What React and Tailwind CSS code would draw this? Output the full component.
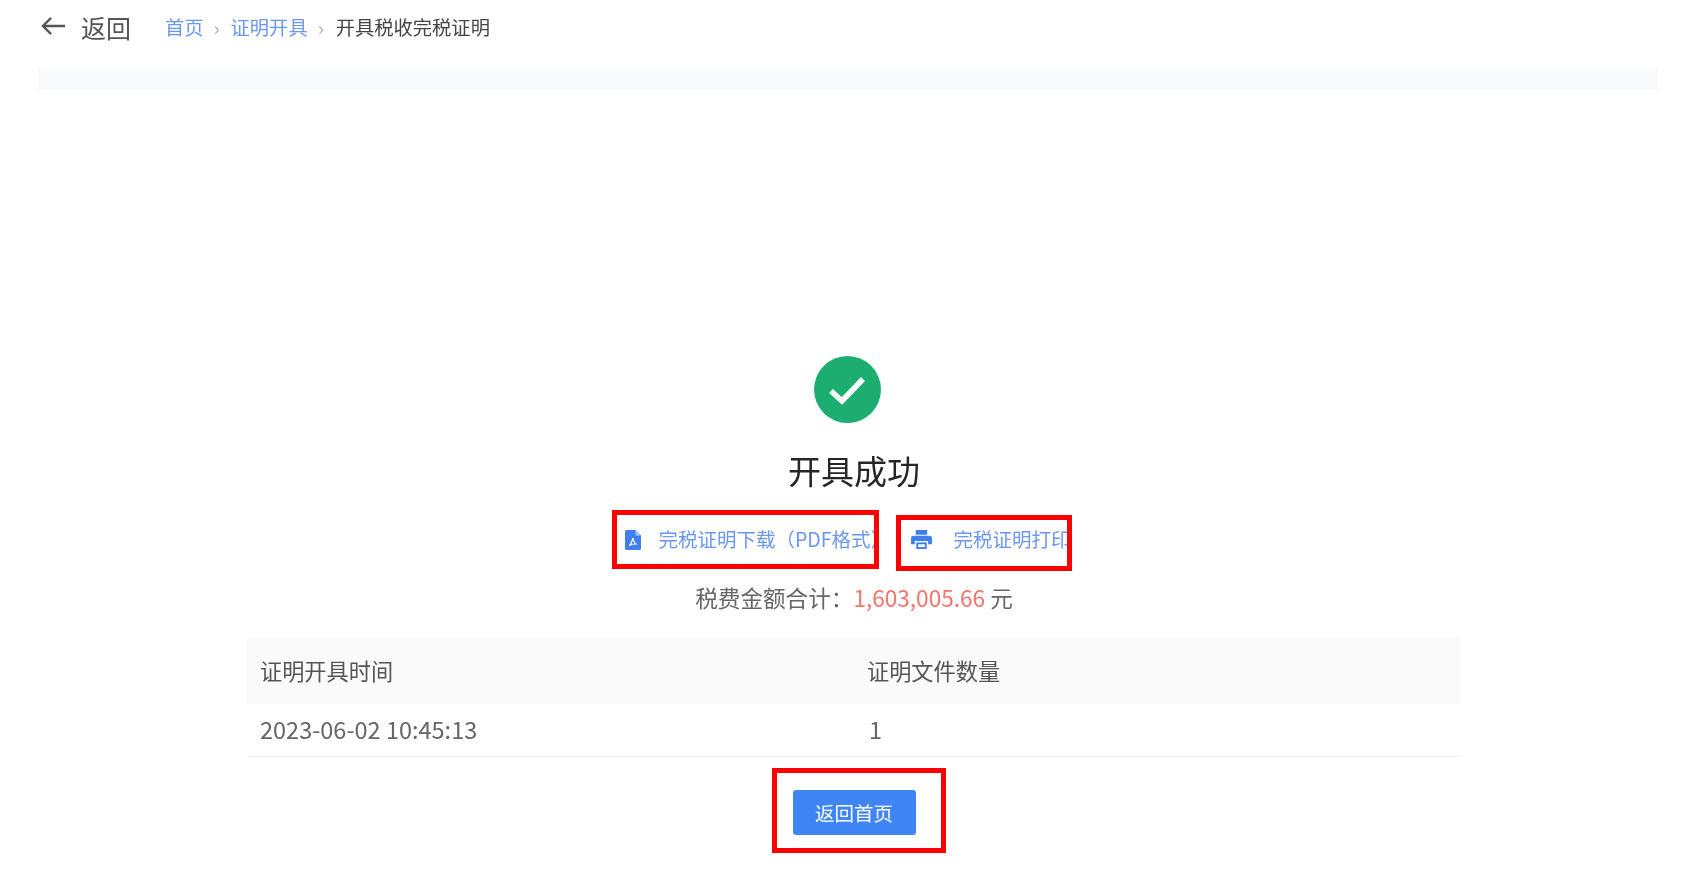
const FONT = "font-['Noto_Sans_CJK_SC','Noto_Sans',sans-serif]";

function PdfIcon() {
  return (
    <svg viewBox="0 0 16 20" className="w-[16px] h-[20px] shrink-0" aria-hidden="true">
      <path d="M1.5 0H10.5L16 5.5V18.5A1.5 1.5 0 0 1 14.5 20H1.5A1.5 1.5 0 0 1 0 18.5V1.5A1.5 1.5 0 0 1 1.5 0Z" fill="#3f7ff0" />
      <path d="M10.5 0V5.5H16Z" fill="#a9c6f8" />
      <path d="M8 8C7.2 11 6.4 13.5 4.4 15.6M8 8C8.5 11 9.6 13.6 11.8 14.4M4.4 15.4C6.6 14.2 9 13.8 11.8 14.2" stroke="#ffffff" strokeWidth="1.1" fill="none" />
    </svg>
  );
}

function PrintIcon() {
  return (
    <svg viewBox="0 0 22 20" className="w-[21px] h-[19px] shrink-0" aria-hidden="true">
      <path d="M5 0H17V5H5Z" fill="#3f7ff0" />
      <path d="M2.5 6H19.5A2.5 2.5 0 0 1 22 8.5V15H18V11.5H4V15H0V8.5A2.5 2.5 0 0 1 2.5 6Z" fill="#3f7ff0" />
      <path d="M5.5 13H16.5V20H5.5Z" fill="#3f7ff0" />
      <path d="M7.5 15H14.5V18H7.5Z" fill="#ffffff" />
    </svg>
  );
}

export default function App() {
  return (
    <div className={`${FONT} w-[1694px] h-[869px] overflow-hidden bg-white blur-[0.6px]`}>
      <header className="flex items-center h-[54px] pl-[41px]">
        <svg viewBox="0 0 26 20" className="w-[25px] h-[20px] mb-[2px] shrink-0" aria-hidden="true">
          <path d="M25 10H2M10.5 1.5L2 10L10.5 18.5" stroke="#555555" strokeWidth="2.4" fill="none" />
        </svg>
        <span className="ml-[15px] w-[84px] text-[25px] leading-none text-[#555555]">返回</span>
        <nav className="flex items-center pt-[2px] text-[19.3px] leading-none">
          <span className="text-[#6b97f2]">首页</span>
          <span className="w-[27px] pl-[10px] text-[20px] text-[#b0b0b0]">›</span>
          <span className="text-[#6b97f2]">证明开具</span>
          <span className="w-[28px] pl-[10px] text-[20px] text-[#b0b0b0]">›</span>
          <span className="text-[#444444]">开具税收完税证明</span>
        </nav>
      </header>

      <div className="ml-[38px] mt-[14px] w-[1620px] h-[22px] bg-[#f9fafc]" />

      <main className="ml-[247px] w-[1214px] flex flex-col items-center">
        <div className="mt-[266px] mr-[14px] w-[67px] h-[67px] rounded-full bg-[#1bae70] flex items-center justify-center">
          <svg viewBox="0 0 40 32" className="w-[40px] h-[32px]" aria-hidden="true">
            <path d="M4 17L15 27L36 5" stroke="#ffffff" strokeWidth="5.5" fill="none" />
          </svg>
        </div>

        <h1 className="mt-[27px] text-[33px] leading-[40px] font-normal text-[#262626]">开具成功</h1>

        <div className="mt-[20px] mr-[25px] flex items-start text-[19.5px] leading-none text-[#6b97f2]">
          <a className="w-[267px] h-[59px] border-[5px] border-[#ff0000] overflow-hidden flex items-center pl-[8px] whitespace-nowrap">
            <PdfIcon />
            <span className="ml-[18px] pb-[2px]">完税证明下载（PDF格式）</span>
          </a>
          <a className="ml-[17px] mt-[5px] w-[176px] h-[56px] border-[5px] border-[#ff0000] overflow-hidden flex items-center pl-[10px] pb-[8px] whitespace-nowrap">
            <PrintIcon />
            <span className="ml-[22px]">完税证明打印</span>
          </a>
        </div>

        <p className="mt-[12px] text-[22.6px] leading-[30px] text-[#666666]">
          税费金额合计：<span className="text-[#f5736a]">1,603,005.66</span> 元
        </p>

        <div className="mt-[24px] w-full grid grid-cols-[620px_1fr] border-b border-[#f0f0f0] text-[22.2px] text-[#555555]">
          <div className="h-[67px] pl-[13px] flex items-center bg-[#fafafa]">证明开具时间</div>
          <div className="h-[67px] flex items-center bg-[#fafafa]">证明文件数量</div>
          <div className="h-[52px] pl-[13px] flex items-center text-[23.5px] text-[#666666]">2023-06-02 10:45:13</div>
          <div className="h-[52px] pl-[2px] flex items-center text-[23.5px] text-[#666666]">1</div>
        </div>

        <div className="mt-[11px] ml-[9px] w-[174px] h-[85px] border-[5px] border-[#ff0000] flex items-start pl-[16px] pt-[17px]">
          <button className="w-[123px] h-[45px] rounded-[3px] bg-[#3f85f5] text-white text-[19.5px] leading-none">返回首页</button>
        </div>
      </main>
    </div>
  );
}
